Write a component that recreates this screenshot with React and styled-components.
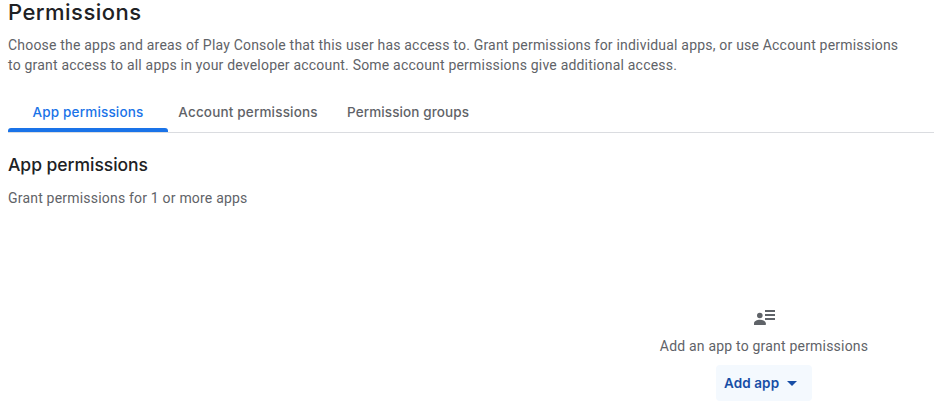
import React from "react";
import styled, { createGlobalStyle } from "styled-components";

const GlobalStyle = createGlobalStyle`
  * { box-sizing: border-box; }
  body {
    margin: 0;
    background: #fff;
    color: #5f6368;
    font: 400 14px/20px Roboto, sans-serif;
    letter-spacing: 0.2px;
  }
`;

const Viewport = styled.main`
  height: 411px;
  overflow: hidden;
  padding-left: 8px;
`;

/* The console content is wider than the visible window. */
const Content = styled.div`
  width: 1512px;
  display: flex;
  flex-direction: column;
`;

const Heading = styled.h1`
  margin: 0;
  height: 35px;
  color: #202124;
  font: 500 22px/24px Inter, sans-serif;
  letter-spacing: 0.47px;
`;

const SubHeading = styled(Heading).attrs({ as: "h2" })`
  margin-top: 20px;
  height: 35px;
  font-size: 17.5px;
  letter-spacing: -0.04px;
`;

const Text = styled.p`
  margin: 0;
  white-space: nowrap;
`;

const Line = styled.span`
  display: block;
  letter-spacing: 0.197px;
`;

const TabBar = styled.div`
  display: flex;
  height: 41px;
  margin-top: 17px;
  border-bottom: 1px solid #dadce0;
`;

const Tab = styled.button`
  width: 160px;
  height: 40px;
  padding: 0;
  border: 0;
  background: none;
  display: flex;
  flex-direction: column;
  align-items: center;
  justify-content: space-between;
  white-space: nowrap;
  color: ${(p) => (p.$active ? "#1a73e8" : "#5f6368")};
  font: 500 13.5px/20px Inter, sans-serif;
  letter-spacing: ${(p) => p.$tracking};
`;

const TabLabel = styled.span`
  padding-top: 10px;
`;

const Indicator = styled.span`
  width: 100%;
  height: 4px;
  border-radius: 3px 3px 0 0;
  background: ${(p) => (p.$active ? "#1a73e8" : "transparent")};
`;

const EmptyState = styled.section`
  margin-top: 97px;
  display: flex;
  flex-direction: column;
  align-items: center;
`;

const PeopleIcon = styled.svg`
  width: 24px;
  height: 24px;
  margin-bottom: 7px;
`;

const AddButton = styled.button`
  width: 96px;
  height: 36px;
  margin-top: 9px;
  padding: 0 0 0 8px;
  border: 0;
  border-radius: 4px;
  background: #f4f9fe;
  color: #174ea6;
  display: flex;
  align-items: center;
  gap: 8px;
  font: 600 13.5px/20px Inter, sans-serif;
  letter-spacing: 0.1px;
  white-space: nowrap;
`;

const tabs = [
  { label: "App permissions", tracking: "0.16px" },
  { label: "Account permissions", tracking: "0.17px" },
  { label: "Permission groups", tracking: "0.1px" },
];

export default function App() {
  return (
    <Viewport>
      <GlobalStyle />
      <Content>
        <Heading>Permissions</Heading>
        <Text>
          <Line>
            Choose the apps and areas of Play Console that this user has access to. Grant
            permissions for individual apps, or use Account permissions
          </Line>
          <Line>
            to grant access to all apps in your developer account. Some account permissions give
            additional access.
          </Line>
        </Text>
        <TabBar role="tablist">
          {tabs.map((tab, i) => (
            <Tab key={tab.label} role="tab" $active={i === 0} $tracking={tab.tracking}>
              <TabLabel>{tab.label}</TabLabel>
              <Indicator $active={i === 0} />
            </Tab>
          ))}
        </TabBar>
        <SubHeading>App permissions</SubHeading>
        <Text>Grant permissions for 1 or more apps</Text>
        <EmptyState>
          <PeopleIcon viewBox="0 0 24 24" fill="#5f6368">
            <circle cx="7.8" cy="10.5" r="2.8" />
            <path d="M2 20v-1.8c0-2 3-3.5 5.9-3.5s5.9 1.5 5.9 3.5V20z" />
            <path d="M13 5h10v2H13zM13 9h10v2H13zM13 13h10v2H13z" />
          </PeopleIcon>
          <Text>Add an app to grant permissions</Text>
          <AddButton>
            Add app
            <svg width="10" height="5" viewBox="0 0 10 5" fill="currentColor">
              <path d="M0 0h10L5 5z" />
            </svg>
          </AddButton>
        </EmptyState>
      </Content>
    </Viewport>
  );
}
